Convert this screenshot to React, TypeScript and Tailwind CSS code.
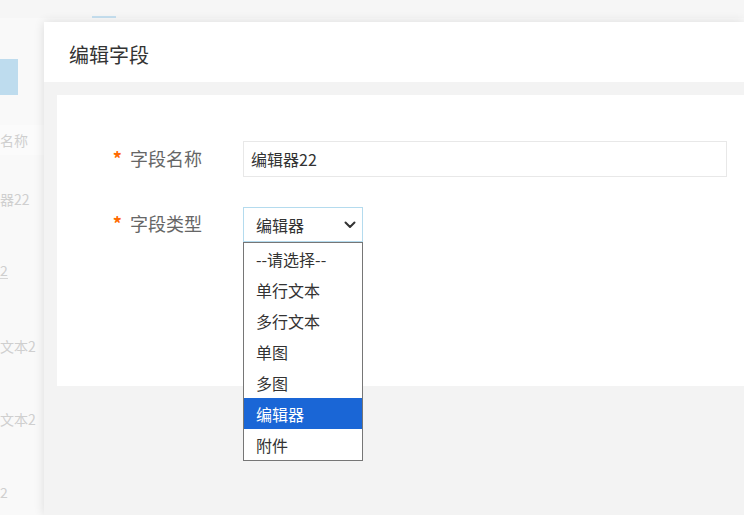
import React from "react";

const font = { fontFamily: '"Noto Sans CJK SC", "Noto Sans", sans-serif' };

function Chevron() {
  return (
    <svg width="12" height="8" viewBox="0 0 12 8" fill="none">
      <path d="M1.5 1.5 L6 6 L10.5 1.5" stroke="#333" strokeWidth="2" strokeLinecap="round" strokeLinejoin="round" />
    </svg>
  );
}

const options = ["--请选择--", "单行文本", "多行文本", "单图", "多图", "编辑器", "附件"];

export default function App() {
  return (
    <div className="relative w-[744px] h-[515px] overflow-hidden bg-[#f9f9f9]" style={font}>
      {/* background page */}
      <div className="h-[18px] bg-[#f6f6f6] flex items-end">
        <div className="ml-[92px] w-[24px] h-[2px] bg-[#c6e0f0]" />
      </div>
      <div className="flex flex-col w-[44px] text-[14px] text-[#cfcfcf]">
        <div className="mt-[41px] w-[18px] h-[36px] bg-[#bedcee]" />
        <div className="mt-[30px] h-[30px] flex items-center whitespace-nowrap bg-[#fbfbfb]">名称</div>
        <div className="mt-[29px] h-[30px] flex items-center whitespace-nowrap">器22</div>
        <div className="mt-[41px] h-[30px] flex items-center whitespace-nowrap">
          <span className="border-b border-[#d6d6d6] leading-[16px]">2</span>
        </div>
        <div className="mt-[46px] h-[30px] flex items-center whitespace-nowrap">文本2</div>
        <div className="mt-[43px] h-[30px] flex items-center whitespace-nowrap">文本2</div>
        <div className="mt-[43px] h-[30px] flex items-center whitespace-nowrap">2</div>
      </div>

      {/* modal */}
      <div className="absolute left-[44px] top-[22px] right-0 bottom-0 bg-[#f3f3f3] shadow-[0_0_10px_rgba(0,0,0,0.12)] flex flex-col">
        <div className="h-[60px] bg-white flex items-center pl-[25px] pt-[5px] text-[20px] text-[#333]">编辑字段</div>
        <div className="pl-[13px] pt-[13px]">
          <div className="relative h-[291px] bg-white pt-[46px]">
            <div className="flex items-center h-[36px]">
              <div className="w-[186px] flex items-center justify-end pr-[41px] pb-[2px] text-[18px] text-[#666]">
                <span className="text-[#ff6a00] font-bold mr-[8px] text-[18px]">*</span>
                <span>字段名称</span>
              </div>
              <div className="w-[484px] h-[36px] border border-[#e8e8e8] flex items-center pl-[7px] text-[16px] text-[#333]">
                编辑器22
              </div>
            </div>
            <div className="flex items-start mt-[30px]">
              <div className="w-[186px] h-[35px] flex items-center justify-end pr-[41px] pb-[2px] text-[18px] text-[#666]">
                <span className="text-[#ff6a00] font-bold mr-[8px] text-[18px]">*</span>
                <span>字段类型</span>
              </div>
              <div className="relative w-[120px]">
                <div className="h-[35px] border border-[#b4dbee] flex items-center justify-between pl-[12px] pr-[6px] text-[16px] text-[#333]">
                  <span>编辑器</span>
                  <Chevron />
                </div>
                <div className="absolute left-0 top-[35px] w-[120px] border border-[#767676] bg-white z-10">
                  {options.map((o) => (
                    <div
                      key={o}
                      className={
                        o === "编辑器"
                          ? "h-[31px] flex items-center pl-[12px] text-[16px] bg-[#1a66d6] text-white"
                          : "h-[31px] flex items-center pl-[12px] text-[16px] text-[#333]"
                      }
                    >
                      {o}
                    </div>
                  ))}
                </div>
              </div>
            </div>
          </div>
        </div>
      </div>
    </div>
  );
}
